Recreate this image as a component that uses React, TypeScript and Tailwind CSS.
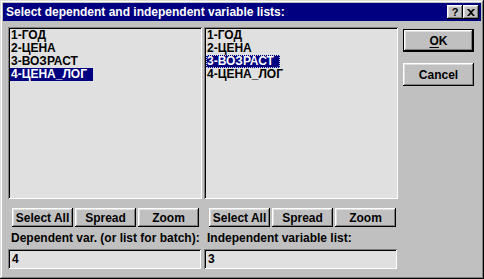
import React from "react";

const raised =
  "bg-[#c0c0c0] shadow-[inset_-1px_-1px_#000,inset_1px_1px_#fff,inset_-2px_-2px_#808080,inset_2px_2px_#dfdfdf]";
const sunken =
  "bg-[#e0e0e0] shadow-[inset_1px_1px_#808080,inset_-1px_-1px_#fff,inset_2px_2px_#000,inset_-2px_-2px_#dfdfdf]";

const items = ["1-ГОД", "2-ЦЕНА", "3-ВОЗРАСТ", "4-ЦЕНА_ЛОГ"];

function VarList({ selected, focused }: { selected: number; focused?: boolean }) {
  return (
    <div className={`h-[172px] pt-[2px] pl-[2px] ${sunken}`}>
      {items.map((it, i) =>
        i === selected ? (
          <div
            key={it}
            className={`h-[13px] leading-[13px] w-fit pl-[1px] pr-[6px] bg-[#000080] text-white ${
              focused ? "outline outline-1 outline-dotted outline-[#c8c8ff] -outline-offset-1" : ""
            }`}
          >
            {it}
          </div>
        ) : (
          <div key={it} className="h-[13px] leading-[13px] pl-[1px] text-black">
            {it}
          </div>
        )
      )}
    </div>
  );
}

function SmallButton({ label, w }: { label: string; w: string }) {
  return (
    <div className={`${w} h-[19px] flex items-center justify-center text-black ${raised}`}>
      {label}
    </div>
  );
}

function Column({
  selected,
  focused,
  label,
  value,
  pad,
}: {
  selected: number;
  focused?: boolean;
  label: string;
  value: string;
  pad: string;
}) {
  return (
    <div className="w-[194px] flex flex-col">
      <VarList selected={selected} focused={focused} />
      <div className={`flex gap-[2px] mt-[9px] ${pad}`}>
        <SmallButton label="Select All" w="w-[61px]" />
        <SmallButton label="Spread" w="w-[61px]" />
        <SmallButton label="Zoom" w="w-[61px]" />
      </div>
      <div className="mt-[4px] h-[14px] leading-[14px] pl-[3px] text-black whitespace-nowrap">{label}</div>
      <div className={`mt-[4px] h-[20px] w-[193px] pl-[4px] flex items-center text-black ${sunken}`}>
        {value}
      </div>
    </div>
  );
}

export default function App() {
  return (
    <div
      className="w-[484px] h-[279px] bg-[#c0c0c0] p-[3px] font-bold text-[12px] shadow-[inset_-1px_-1px_#000,inset_1px_1px_#dfdfdf,inset_-2px_-2px_#808080,inset_2px_2px_#fff]"
      style={{ fontFamily: '"Liberation Sans", Arial, sans-serif' }}
    >
      <div className="h-[18px] bg-[#000080] flex items-center justify-between pl-[3px] pr-[2px]">
        <span className="text-white text-[12px] whitespace-nowrap">
          Select dependent and independent variable lists:
        </span>
        <div className="flex">
          <div className={`w-[16px] h-[14px] flex items-center justify-center text-black text-[11px] ${raised}`}>
            ?
          </div>
          <div className={`w-[16px] h-[14px] flex items-center justify-center ${raised}`}>
            <svg width="8" height="7" viewBox="0 0 8 7">
              <path d="M0 0h2l2 2 2-2h2L5 3.5 8 7H6L4 5 2 7H0l3-3.5z" fill="#000" />
            </svg>
          </div>
        </div>
      </div>
      <div className="flex pl-[5px] pt-[6px]">
        <Column selected={3} label="Dependent var. (or list for batch):" value="4" pad="pl-[4px]" />
        <div className="ml-[2px]">
          <Column selected={2} focused label="Independent variable list:" value="3" pad="pl-[5px]" />
        </div>
        <div className="ml-[5px] pt-[2px] flex flex-col gap-[11px]">
          <div className="w-[71px] h-[23px] bg-black p-[1px]">
            <div className={`w-full h-full flex items-center justify-center text-black ${raised}`}>
              <span>
                <span className="underline underline-offset-2">O</span>K
              </span>
            </div>
          </div>
          <div className={`w-[71px] h-[23px] flex items-center justify-center text-black ${raised}`}>
            Cancel
          </div>
        </div>
      </div>
    </div>
  );
}
